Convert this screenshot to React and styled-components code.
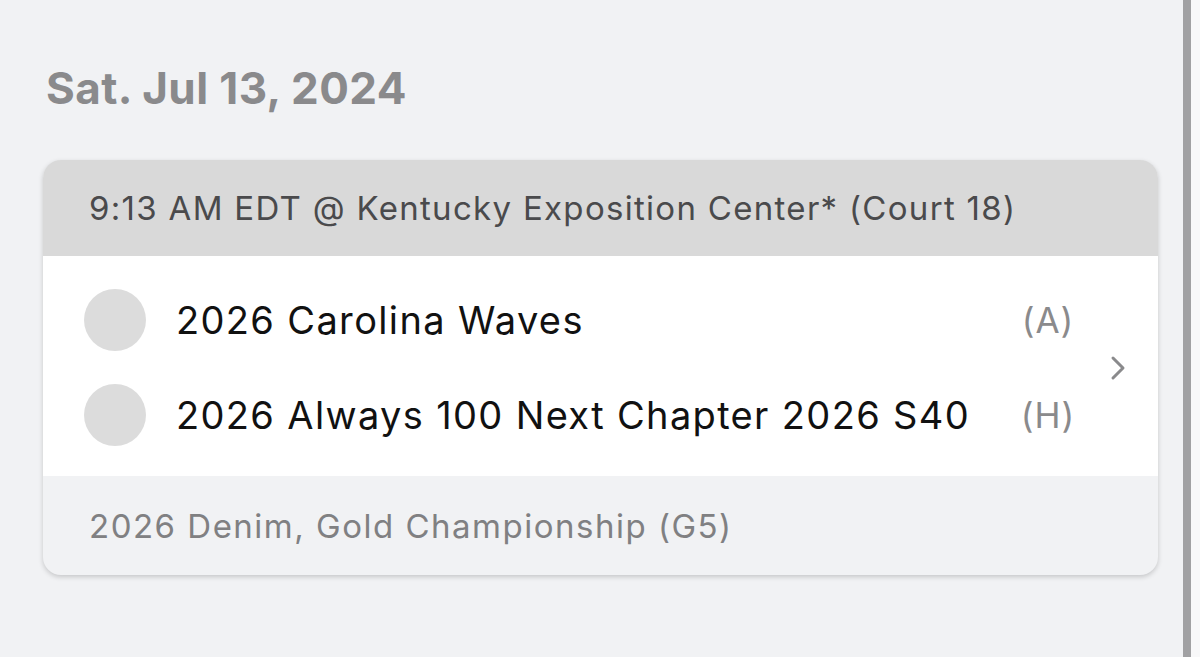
import styled, { createGlobalStyle } from 'styled-components'

const GlobalStyle = createGlobalStyle`
  html, body {
    margin: 0;
    padding: 0;
    background: #f1f2f4;
    font-family: Inter, "Liberation Sans", sans-serif;
  }
`

const Screen = styled.div`
  display: flex;
  height: 657px;
  overflow: hidden;
`

const Main = styled.div`
  flex: 1;
  padding: 62px 25px 0 43px;
`

const Scrollbar = styled.div`
  width: 8px;
  background: #a1a1a3;
  border-right: 9px solid #f8f8f9;
`

const DateTitle = styled.h1`
  margin: 0 0 0 3px;
  font-size: 44px;
  font-weight: 700;
  color: #8a8a8c;
  letter-spacing: 0.4px;
  line-height: 52px;
`

const Card = styled.div`
  margin-top: 46px;
  border-radius: 18px;
  overflow: hidden;
  background: #f1f2f4;
  box-shadow: 0 2px 5px rgba(0, 0, 0, 0.18);
`

const CardHeader = styled.div`
  height: 96px;
  display: flex;
  align-items: center;
  padding-left: 46px;
  background: #d9d9d9;
  color: #4a4a4c;
  font-size: 33px;
  letter-spacing: 1.3px;
`

const CardBody = styled.div`
  background: #fff;
  display: flex;
  align-items: center;
  padding: 33px 0 30px 41px;
`

const Teams = styled.div`
  flex: 1;
  display: flex;
  flex-direction: column;
  gap: 33px;
`

const TeamRow = styled.div`
  display: flex;
  align-items: center;
  height: 62px;
`

const Avatar = styled.div`
  width: 62px;
  height: 62px;
  border-radius: 50%;
  background: #dcdcdc;
  flex-shrink: 0;
`

const TeamName = styled.div`
  flex: 1;
  margin-left: 30px;
  font-size: 38px;
  letter-spacing: 1.35px;
  color: #111;
`

const Side = styled.div`
  font-size: 35px;
  letter-spacing: 1px;
  color: #8a8a8c;
  width: 60px;
  text-align: center;
`

const Chevron = styled.div`
  width: 80px;
  display: flex;
  justify-content: center;
  color: #8a8a8c;
`

const CardFooter = styled.div`
  height: 99px;
  display: flex;
  align-items: center;
  padding-left: 46px;
  color: #808082;
  font-size: 33px;
  letter-spacing: 1.5px;
`

export default function App () {
  const teams = [
    { name: '2026 Carolina Waves', side: '(A)' },
    { name: '2026 Always 100 Next Chapter 2026 S40', side: '(H)' }
  ]

  return (
    <Screen>
      <GlobalStyle />
      <Main>
        <DateTitle>Sat. Jul 13, 2024</DateTitle>
        <Card>
          <CardHeader>9:13 AM EDT @ Kentucky Exposition Center* (Court 18)</CardHeader>
          <CardBody>
            <Teams>
              {teams.map((t) => (
                <TeamRow key={t.name}>
                  <Avatar />
                  <TeamName>{t.name}</TeamName>
                  <Side>{t.side}</Side>
                </TeamRow>
              ))}
            </Teams>
            <Chevron>
              <svg width="18" height="26" viewBox="0 0 18 26" fill="none" stroke="currentColor" strokeWidth="3" strokeLinecap="round" strokeLinejoin="round">
                <path d="M4 3l10 10-10 10" />
              </svg>
            </Chevron>
          </CardBody>
          <CardFooter>2026 Denim, Gold Championship (G5)</CardFooter>
        </Card>
      </Main>
      <Scrollbar />
    </Screen>
  )
}
